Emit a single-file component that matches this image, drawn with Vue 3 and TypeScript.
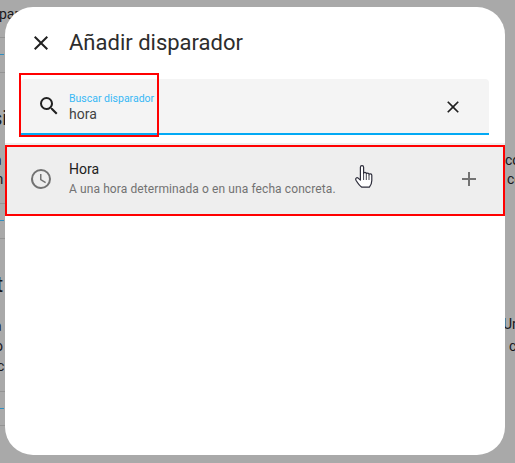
<script setup lang="ts">
const fragments = [
  { text: 'para las que se han definido acciones y cuándo se ejecutan', top: 4, left: -1, size: 14 },
  { text: 'si', top: 108, left: -8, size: 20 },
  { text: 'a', top: 150, left: -6, size: 14 },
  { text: 'm', top: 169, left: -9, size: 14 },
  { text: 't', top: 275, left: -4, size: 22 },
  { text: 'a', top: 316, left: -6, size: 14 },
  { text: 'o', top: 336, left: -5, size: 14 },
  { text: 'c', top: 356, left: -3, size: 14 },
  { text: 'co', top: 150, left: 505, size: 14 },
  { text: 'co', top: 169, left: 507, size: 14 },
  { text: 'Un', top: 314, left: 503, size: 14 },
  { text: 'c', top: 336, left: 509, size: 14 }
]
const greyLines = [37, 72, 203, 238, 391, 425]
const blueLines = [54, 220, 408]
</script>

<template>
  <div class="screen">
    <span v-for="f in fragments" :key="f.text + f.top" class="bg-text"
      :style="{ top: f.top + 'px', left: f.left + 'px', fontSize: f.size + 'px' }">{{ f.text }}</span>
    <i v-for="y in greyLines" :key="'g' + y" class="bg-line" :style="{ top: y + 'px' }"></i>
    <i v-for="y in blueLines" :key="'b' + y" class="bg-blue" :style="{ top: y + 'px' }"></i>

    <section class="dialog">
      <header class="head">
        <svg class="ic close" viewBox="0 0 24 24"><path d="M19 6.41 17.59 5 12 10.59 6.41 5 5 6.41 10.59 12 5 17.59 6.41 19 12 13.41 17.59 19 19 17.59 13.41 12z" /></svg>
        <h2>Añadir disparador</h2>
      </header>
      <div class="search">
        <svg class="ic mag" viewBox="0 0 24 24"><path d="M9.5 3A6.5 6.5 0 0 1 16 9.5c0 1.61-.59 3.09-1.56 4.23l.27.27h.79l5 5-1.5 1.5-5-5v-.79l-.27-.27A6.516 6.516 0 0 1 9.5 16 6.5 6.5 0 0 1 3 9.5 6.5 6.5 0 0 1 9.5 3m0 2C7 5 5 7 5 9.5S7 14 9.5 14 14 12 14 9.5 12 5 9.5 5z" /></svg>
        <div class="field">
          <label>Buscar disparador</label>
          <span>hora</span>
        </div>
        <svg class="ic clear" viewBox="0 0 24 24"><path d="M19 6.41 17.59 5 12 10.59 6.41 5 5 6.41 10.59 12 5 17.59 6.41 19 12 13.41 17.59 19 19 17.59 13.41 12z" /></svg>
      </div>
      <div class="row">
        <svg class="ic clock" viewBox="0 0 24 24"><path d="M12 20a8 8 0 0 0 8-8 8 8 0 0 0-8-8 8 8 0 0 0-8 8 8 8 0 0 0 8 8m0-18a10 10 0 0 1 10 10 10 10 0 0 1-10 10C6.47 22 2 17.5 2 12A10 10 0 0 1 12 2m.5 5v5.25l4.5 2.67-.75 1.23L11 13V7h1.5z" /></svg>
        <div class="texts">
          <div class="title">Hora</div>
          <div class="sub">A una hora determinada o en una fecha concreta.</div>
        </div>
        <svg class="ic plus" viewBox="0 0 24 24"><path d="M19 13h-6v6h-2v-6H5v-2h6V5h2v6h6v2z" /></svg>
      </div>
    </section>

    <div class="mark mark-search"></div>
    <div class="mark mark-row"></div>

    <svg class="cursor" viewBox="0 0 20 25" width="20" height="25">
      <path d="M5.4 2.2c0-2 3.2-2 3.2 0v6.3c0-1.5 2.7-1.5 2.7 0v.6c0-1.4 2.7-1.4 2.7 0v.7c.1-1.3 2.8-1.2 2.8.4v5.3c0 2.9-1 5-2.4 6.7H6.8C4.9 21 2.900 18.400 1 15.200c-1-1.800.8-3.100 2.100-2.100l2.300 2z" fill="#fff" stroke="#2c2c3a" stroke-width="1.200" stroke-linejoin="round" />
      <path d="M8.600 9v6M11.300 9.500v5.500M14 10v5" fill="none" stroke="#2c2c3a" stroke-width="0.900" />
    </svg>
  </div>
</template>

<style scoped>
.screen {
  position: relative;
  width: 515px;
  height: 463px;
  overflow: hidden;
  background: #a9a9a9;
  font-family: Roboto, "Liberation Sans", sans-serif;
}
.bg-text {
  position: absolute;
  color: #17171c;
  line-height: 20px;
  white-space: nowrap;
}
.bg-line {
  position: absolute;
  left: 0;
  width: 5px;
  height: 1px;
  background: #949494;
}
.bg-blue {
  position: absolute;
  left: 0;
  width: 4px;
  height: 1px;
  background: #2f8fc0;
}
.dialog {
  position: absolute;
  left: 5px;
  top: 7px;
  width: 500px;
  height: 448px;
  background: #fff;
  border-radius: 28px;
  overflow: hidden;
}
.head {
  display: flex;
  align-items: center;
  height: 72px;
  padding-left: 24px;
}
.ic {
  display: block;
  flex: none;
  width: 24px;
  height: 24px;
  fill: #212121;
}
.head h2 {
  margin: 0 0 0 16px;
  font-size: 22px;
  font-weight: 400;
  line-height: 28px;
  color: #2d2d2d;
}
.search {
  display: flex;
  align-items: center;
  height: 56px;
  margin: 0 16px;
  padding: 0 12px 0 16px;
  box-sizing: border-box;
  background: #f4f4f4;
  border-bottom: 2px solid #03a9f4;
  border-radius: 4px 4px 0 0;
}
.field {
  flex: 1;
  margin-left: 8px;
  padding-top: 4px;
}
.field label {
  display: block;
  font-size: 10.5px;
  line-height: 12px;
  color: #38b8f5;
}
.field span {
  display: block;
  font-size: 14px;
  line-height: 19px;
  color: #424242;
}
.clear {
  width: 20px;
  height: 20px;
  margin: 1px 14px 0 0;
}
.row {
  display: flex;
  align-items: center;
  height: 72px;
  margin-top: 8px;
  padding: 0 24px;
  background: #eeeeee;
}
.clock,
.plus {
  fill: #737373;
}
.texts {
  flex: 1;
  margin-left: 16px;
  padding-bottom: 2px;
}
.title {
  margin-bottom: 2px;
  font-size: 14px;
  line-height: 20px;
  color: #212121;
}
.sub {
  font-size: 12px;
  line-height: 16px;
  letter-spacing: 0.1px;
  color: #727272;
}
.mark {
  position: absolute;
  box-sizing: border-box;
  border: 2px solid #f00;
}
.mark-search {
  left: 19px;
  top: 73px;
  width: 140px;
  height: 64px;
}
.mark-row {
  left: 5px;
  top: 145px;
  width: 500px;
  height: 71px;
}
.cursor {
  position: absolute;
  left: 355px;
  top: 165px;
}
</style>
